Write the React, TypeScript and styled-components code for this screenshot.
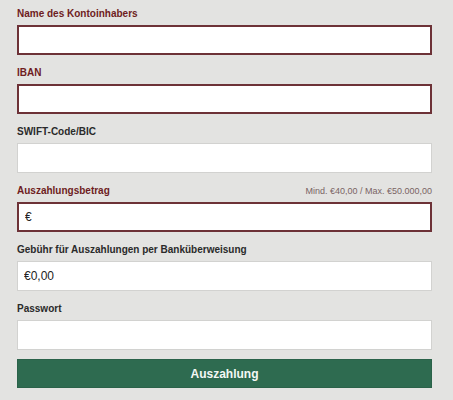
import React from 'react';
import styled, { createGlobalStyle } from 'styled-components';

const GlobalStyle = createGlobalStyle`
  html, body {
    margin: 0;
    padding: 0;
    background: #e3e3e1;
  }
  body {
    font-family: "Liberation Sans", Arial, sans-serif;
  }
`;

const Form = styled.form`
  display: flex;
  flex-direction: column;
  padding: 7px 21px 0 17px;
`;

const Field = styled.div`
  display: flex;
  flex-direction: column;
  margin-bottom: 11px;
`;

const LabelRow = styled.div`
  display: flex;
  justify-content: space-between;
  align-items: baseline;
  height: 14px;
  margin-bottom: 4px;
`;

const Label = styled.label<{ $error?: boolean }>`
  font-size: 10px;
  font-weight: bold;
  line-height: 14px;
  color: ${(p) => (p.$error ? '#6e1c22' : '#2a2a2a')};
`;

const Hint = styled.span`
  font-size: 9px;
  line-height: 14px;
  color: #7a6464;
`;

const Input = styled.input<{ $error?: boolean }>`
  box-sizing: border-box;
  width: 100%;
  height: 30px;
  margin: 0;
  padding: 0 6px;
  font-family: "Liberation Sans", Arial, sans-serif;
  font-size: 12px;
  color: #222;
  background: #fff;
  border: ${(p) => (p.$error ? '2px solid #6d3237' : '1px solid #d2d2d0')};
  border-radius: 0;
  outline: none;
`;

const Submit = styled.button`
  box-sizing: border-box;
  width: 100%;
  height: 29px;
  margin-top: -2px;
  border: 1px solid #2a6249;
  background: #2e6b50;
  color: #f4f8f5;
  font-family: "Liberation Sans", Arial, sans-serif;
  font-size: 12px;
  font-weight: bold;
  cursor: pointer;
`;

type FieldDef = {
  label: string;
  error?: boolean;
  value?: string;
  hint?: string;
  type?: string;
};

const fields: FieldDef[] = [
  { label: 'Name des Kontoinhabers', error: true },
  { label: 'IBAN', error: true },
  { label: 'SWIFT-Code/BIC' },
  {
    label: 'Auszahlungsbetrag',
    error: true,
    value: '€',
    hint: 'Mind. €40,00 / Max. €50.000,00',
  },
  { label: 'Gebühr für Auszahlungen per Banküberweisung', value: '€0,00' },
  { label: 'Passwort', type: 'password' },
];

export default function App(): JSX.Element {
  return (
    <>
      <GlobalStyle />
      <Form onSubmit={(e) => e.preventDefault()}>
        {fields.map((f) => (
          <Field key={f.label}>
            <LabelRow>
              <Label $error={f.error}>{f.label}</Label>
              {f.hint && <Hint>{f.hint}</Hint>}
            </LabelRow>
            <Input
              $error={f.error}
              type={f.type || 'text'}
              defaultValue={f.value}
            />
          </Field>
        ))}
        <Submit type="submit">Auszahlung</Submit>
      </Form>
    </>
  );
}
